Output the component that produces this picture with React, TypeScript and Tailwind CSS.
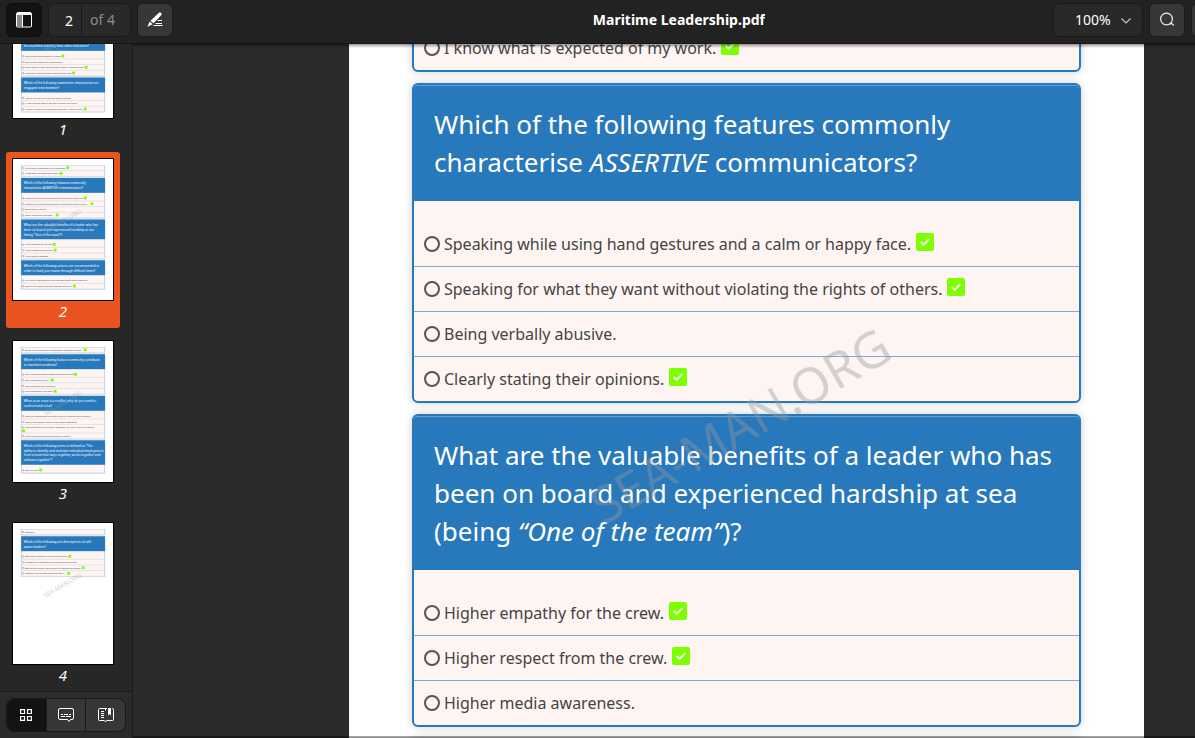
import React from "react";

type Option = { text: string; correct?: boolean; wrap?: boolean };
type MiniCard = { lines?: string[]; options: Option[]; open?: boolean };
type MiniPage = { start: number; cards: MiniCard[] };

const miniPages: MiniPage[] = [
  {
    start: 431,
    cards: [
      {
        lines: ["Which of the following factors explain why", "accidents are more common in", "the maritime industry than other industries?"],
        options: [
          { text: "Multicultural crews change by number.", correct: true },
          { text: "Lack of requirements for a shared table." },
          { text: "Risk exposure is often due to human element in the work done.", correct: true },
          { text: "Constantly changing teams of seafarers and crew.", correct: true },
        ],
      },
      {
        lines: ["Which of the following statements characterises an", "engaged crew member?"],
        options: [
          { text: "I would like a pay-up prize at the end of the week." },
          { text: "If I see a danger coming, we take it to keep it for myself." },
          { text: "I do not like looking and someone needs the. I know my work.", correct: true },
        ],
        open: true,
      },
    ],
  },
  {
    start: 48,
    cards: [
      {
        options: [
          { text: "My opinion is considered by my colleagues.", correct: true },
          { text: "I know what is expected of my work.", correct: true },
        ],
      },
      {
        lines: ["Which of the following features commonly", "characterise ASSERTIVE communicators?"],
        options: [
          { text: "Speaking while using hand gestures and a calm or happy face.", correct: true },
          { text: "Speaking for what they want without violating the rights of others.", correct: true },
          { text: "Being verbally abusive." },
          { text: "Clearly stating their opinions.", correct: true },
        ],
      },
      {
        lines: ["What are the valuable benefits of a leader who has", "been on board and experienced hardship at sea", "(being “One of the team”)?"],
        options: [
          { text: "Higher empathy for the crew.", correct: true },
          { text: "Higher respect from the crew.", correct: true },
          { text: "Higher media awareness." },
        ],
      },
      {
        lines: ["Which of the following actions are recommended in", "order to lead your teams through difficult times?"],
        options: [
          { text: "Try to do all crew members from bad news about what is going on." },
          { text: "Keep on your door so that the crew can reach you.", correct: true },
        ],
        open: true,
      },
    ],
  },
  {
    start: 48,
    cards: [
      { options: [{ text: "Do not be like the leaders in emergency situations on board.", correct: true }] },
      {
        lines: ["Which of the following factors commonly contribute", "to maritime accidents?"],
        options: [
          { text: "Lack of communication between the bridge and crew.", correct: true },
          { text: "Lack of procedures to say.", correct: true },
          { text: "Lack of seafarer’s hard reporting." },
          { text: "Lack of teamwork in the crew.", correct: true },
        ],
      },
      {
        lines: ["When in an issue is a conflict, why do you need to", "confront and solve?"],
        options: [
          { text: "When an incident could be a cyber glitch or a problem and an blame it." },
          { text: "When a crew member looks for their better assessment." },
          { text: "When a behaviour is the crew or negatively risky going, they will know our", correct: true, wrap: true },
          { text: "When the two parties can not resolve it rationally." },
        ],
      },
      {
        lines: ["Which of the following terms is defined as “The", "ability to identify and motivate individual employees to", "form a team that stays together, works together and", "achieves together”?"],
        options: [{ text: "Team building.", correct: true }],
        open: true,
      },
    ],
  },
  {
    start: 48,
    cards: [
      { options: [{ text: "Teamwork." }] },
      {
        lines: ["Which of the following are descriptions of self-", "aware leaders?"],
        options: [
          { text: "Being open minded all and the creative ones.", correct: true },
          { text: "To consider big meetings are to the best of the abilities." },
          { text: "Being mindful of the crew through the weather and actions.", correct: true },
          { text: "Frequently asking questions to the familiy.", correct: true },
        ],
      },
    ],
  },
];

function PageMiniature({ page, index }: { page: MiniPage; index: number }) {
  let y = page.start;
  const cards = page.cards.map((card, i) => {
    const top = y;
    const lines = card.lines ?? [];
    const headHeight = lines.length ? lines.length * 38 + 42 : 0;
    const body = top + headHeight + (lines.length ? 20 : 0);
    let rowY = body;
    const rows = card.options.map((option, k) => {
      const at = rowY;
      rowY += option.wrap ? 67 : 45;
      return (
        <g key={k}>
          <rect x="67" y={rowY - 4} width="661" height="7" fill="#dfe3ea" />
          <rect x="73" y={at + 15} width="16" height="16" fill="#c4c0be" />
          <text x="95" y={at + 29} fontSize="16" fill="#444">
            {option.text}
          </text>
          {option.correct && (
            <rect
              x={option.wrap ? 73 : 101 + option.text.length * 7.7}
              y={option.wrap ? at + 38 : at + 10}
              width="22"
              height="22"
              fill="#7cff00"
            />
          )}
        </g>
      );
    });
    const bottom = rowY + 2;
    y = bottom + 11;
    return (
      <g key={i}>
        <rect x="66" y={top} width="663" height={bottom - top} fill="#fef4f1" stroke="#b3cce2" strokeWidth="7" />
        {rows}
        {headHeight > 0 && <rect x="65" y={top} width="667" height={headHeight} fill="#2879bc" />}
        {lines.map((line, k) => (
          <text key={k} x="85" y={top + 51 + k * 38} fontSize="25" fill="#fff">
            {line}
          </text>
        ))}
      </g>
    );
  });
  return (
    <svg viewBox="0 0 795 1121" className="block w-full bg-white" fontFamily="Noto Sans, sans-serif" aria-hidden="true">
      <defs>
        <clipPath id={`printable-${index}`}>
          <rect x="48" y="48" width="700" height="1029" />
        </clipPath>
      </defs>
      <g clipPath={`url(#printable-${index})`}>{cards}</g>
      <text x="393" y="514" fontSize="50" textAnchor="middle" fill="#999" fillOpacity="0.5" transform="rotate(-30 393 496)">
        SEA-MAN.ORG
      </text>
    </svg>
  );
}

function Thumbnail({ page, number, selected }: { page: MiniPage; number: number; selected?: boolean }) {
  return (
    <button
      type="button"
      aria-label={`Page ${number}`}
      className={selected ? "block w-full rounded-[3px] bg-[#e95420] p-1.5" : "block w-full rounded-[3px] p-1.5"}
    >
      <span className="block border border-black">
        <PageMiniature page={page} index={number} />
      </span>
      <span className="block text-[15px] leading-[21px] text-white italic">{number}</span>
    </button>
  );
}

function Tick() {
  return (
    <svg viewBox="0 0 18 18" className="mb-1 ml-[5px] size-[18px] shrink-0" aria-label="Correct">
      <rect width="18" height="18" rx="2" fill="#7cff00" />
      <path d="M4.600 8.900l3 3 5.800-6" fill="none" stroke="#fff" strokeWidth="1.900" />
    </svg>
  );
}

function QuestionCard({ title, options, name, first }: { title?: React.ReactNode; options: Option[]; name: string; first?: boolean }) {
  return (
    <section className="overflow-hidden rounded-md border-2 border-[#2879bc] bg-[#fef4f1] shadow-[0_0_8px_rgba(0,0,0,0.2)]">
      {title && (
        <h2 className="bg-[#2879bc] px-5 py-5 text-[26px] leading-[38px] text-white shadow-[inset_0_1px_0_#659fce]">{title}</h2>
      )}
      <ul className={first ? "" : "pt-5"}>
        {options.map((option, i) => (
          <li key={option.text} className={i === 0 ? "" : "border-t border-[#7eabd3]"}>
            <label className={i === 0 ? "flex h-[45px] items-center px-2.5" : "flex h-11 items-center px-2.5"}>
              <input
                type="radio"
                name={name}
                className="mr-1 size-4 shrink-0 appearance-none rounded-full border-2 border-[#555]"
              />
              <span className="text-base text-[#444]">{option.text}</span>
              {option.correct && <Tick />}
            </label>
          </li>
        ))}
      </ul>
    </section>
  );
}

const tool = "flex h-[34px] w-9 shrink-0 items-center justify-center rounded-md border border-[#1a1a1a] bg-[#373737] text-white";

function Header() {
  return (
    <header className="relative z-10 flex h-11 shrink-0 items-start overflow-hidden border-b border-[#151515] bg-[#222] px-1.5 pt-[3px] text-white">
      <button type="button" aria-label="Side pane" className="flex h-[34px] w-9 shrink-0 items-center justify-center rounded-md border border-[#0b0b0b] bg-[#131313]">
        <svg viewBox="0 0 16 16" className="size-4">
          <rect x="1" y="2" width="5" height="12" fill="#8a8a8a" />
          <path d="M2 .5h12A1.500 1.500 0 0 1 15.500 2v12a1 1 0 0 1-1 1h-13a1 1 0 0 1-1-1V2A1.500 1.500 0 0 1 2 .5zM6.500 2v13" fill="none" stroke="#fff" />
          <path d="M1 1h14v2H1z" fill="#fff" />
        </svg>
      </button>
      <div className="ml-1.5 flex h-[34px] w-[83px] shrink-0 items-center overflow-hidden rounded-md border border-[#1a1a1a] bg-[#292929] text-sm">
        <input aria-label="Page number" defaultValue="2" className="h-full w-[33px] border-r border-[#1a1a1a] pr-2 text-right text-white" />
        <span className="pl-2 text-[#8c8c8c]">of 4</span>
      </div>
      <button type="button" aria-label="Annotate" className={`${tool} ml-1.5`}>
        <svg viewBox="0 0 16 16" className="size-4">
          <path d="M12.200 .6Q14 .2 14.800 1.800L14.200 3.200 6.500 11.200 3.500 8.700zM2.700 9.600l3 2.600L.4 14.800z" fill="#fff" />
          <path d="M10.500 8.500H15M8.500 11.500H15M6.500 13.500H15.500" stroke="#fff" />
        </svg>
      </button>
      <h1 className="mr-72 ml-auto truncate text-sm leading-[34px] font-bold">Maritime Leadership.pdf</h1>
      <div className="relative h-[34px] w-[90px] shrink-0">
        <select aria-label="Zoom" className="h-full w-full appearance-none rounded-md border border-[#1a1a1a] bg-[#292929] pl-[21px] text-sm text-white">
          <option>100%</option>
        </select>
        <svg viewBox="0 0 10 6" className="pointer-events-none absolute top-[15px] right-3 h-1.5 w-2.5">
          <path d="M.5 .5L5 5 9.500 .5" fill="none" stroke="#ccc" strokeWidth="1.100" />
        </svg>
      </div>
      <button type="button" aria-label="Search" className={`${tool} ml-1.5`}>
        <svg viewBox="0 0 16 16" className="size-4" fill="none" stroke="#eee" strokeWidth="1.200">
          <circle cx="7.500" cy="7" r="5.900" />
          <path d="M10.800 12.500l1.500-1.500 2.500 2.500" />
        </svg>
      </button>
      <button type="button" aria-label="Menu" className={`${tool} -mr-[38px] ml-1.5`} />
    </header>
  );
}

function Sidebar() {
  return (
    <aside className="flex w-[133px] shrink-0 flex-col border-r border-[#1a1a1a] bg-[#272727]">
      <div className="min-h-0 flex-1 overflow-hidden">
        <div className="-mt-[74px] mr-3 ml-1.5 flex flex-col gap-1.5">
          {miniPages.map((page, i) => (
            <Thumbnail key={i} page={page} number={i + 1} selected={i === 1} />
          ))}
        </div>
      </div>
      <div className="shrink-0 border-t border-[#1a1a1a] bg-[#2b2b2b] px-1.5 pt-1.5 pb-1.5">
        <div className="flex h-[34px] w-[120px] overflow-hidden rounded-lg border border-[#1a1a1a] bg-[#373737]">
          <button type="button" aria-label="Thumbnails" className="flex flex-1 items-center justify-center bg-[#131313]">
            <svg viewBox="0 0 12 12" className="size-3" fill="none" stroke="#fff" strokeWidth="1.200">
              <path d="M.6.6h3.900v3.900H.6zM7.500.6h3.900v3.900H7.500zM.6 7.500h3.900v3.900H.6zM7.500 7.500h3.900v3.900H7.500z" />
            </svg>
          </button>
          <button type="button" aria-label="Annotations" className="flex flex-1 items-center justify-center border-l border-[#1a1a1a]">
            <svg viewBox="0 0 16 16" className="size-4" fill="none" stroke="#fff">
              <path d="M2 1.500h12A1.500 1.500 0 0 1 15.500 3v8a1.500 1.500 0 0 1-1.500 1.500h-1.500L11 14.500 9.500 12.500H2A1.500 1.500 0 0 1 .5 11V3A1.500 1.500 0 0 1 2 1.500z" />
              <path d="M3 7.500h2M6 7.500h4M11 7.500h2M3 9.500h4M8 9.500h5" />
            </svg>
          </button>
          <button type="button" aria-label="Bookmarks" className="flex flex-1 items-center justify-center border-l border-[#1a1a1a]">
            <svg viewBox="0 0 16 16" className="size-4" fill="none" stroke="#fff">
              <path d="M9 1.500H1.500A1 1 0 0 0 .5 2.500v10a1 1 0 0 0 1 1H6l1.500 1 1.500-1h5.500a1 1 0 0 0 1-1v-10a1 1 0 0 0-1-1H14M7.500 2v1.500M3 4.500h3M3 6.500h3M3 8.500h3M3 10.500h3" />
              <path d="M10 1h3v7.500l-1.500-1.500L10 8.500z" fill="#fff" stroke="none" />
            </svg>
          </button>
        </div>
      </div>
    </aside>
  );
}

export default function App() {
  const current = miniPages[1].cards;
  return (
    <div className="flex h-screen flex-col overflow-hidden bg-[#2b2b2b] font-['Noto_Sans',sans-serif]">
      <Header />
      <div className="flex min-h-0 flex-1">
        <Sidebar />
        <main className="relative min-w-0 flex-1 overflow-hidden">
          <article className="relative -mt-[114px] mr-[51px] ml-[216px] flex flex-col gap-[11px] bg-white px-[63px] py-12">
            <QuestionCard name="q1" options={current[0].options} first />
            <QuestionCard
              name="q2"
              options={current[1].options}
              title={
                <>
                  Which of the following features commonly characterise <em>ASSERTIVE</em> communicators?
                </>
              }
            />
            <QuestionCard
              name="q3"
              options={current[2].options}
              title={
                <>
                  What are the valuable benefits of a leader who has been on board and experienced hardship at sea (being{" "}
                  <em>“One of the team”</em>)?
                </>
              }
            />
            <QuestionCard name="q4" options={current[3].options} title={current[3].lines?.join(" ")} />
            <div className="pointer-events-none absolute inset-x-0 top-[460px] flex justify-center pr-3">
              <span className="-rotate-30 text-[50px] leading-[70px] text-[#999]/40">SEA-MAN.ORG</span>
            </div>
          </article>
          <div className="pointer-events-none absolute inset-x-0 top-0 h-1 bg-linear-to-b from-black/40 to-transparent" />
          <div className="pointer-events-none absolute inset-x-0 bottom-0 h-0.5 bg-linear-to-t from-black/50 to-black/30" />
        </main>
      </div>
    </div>
  );
}
